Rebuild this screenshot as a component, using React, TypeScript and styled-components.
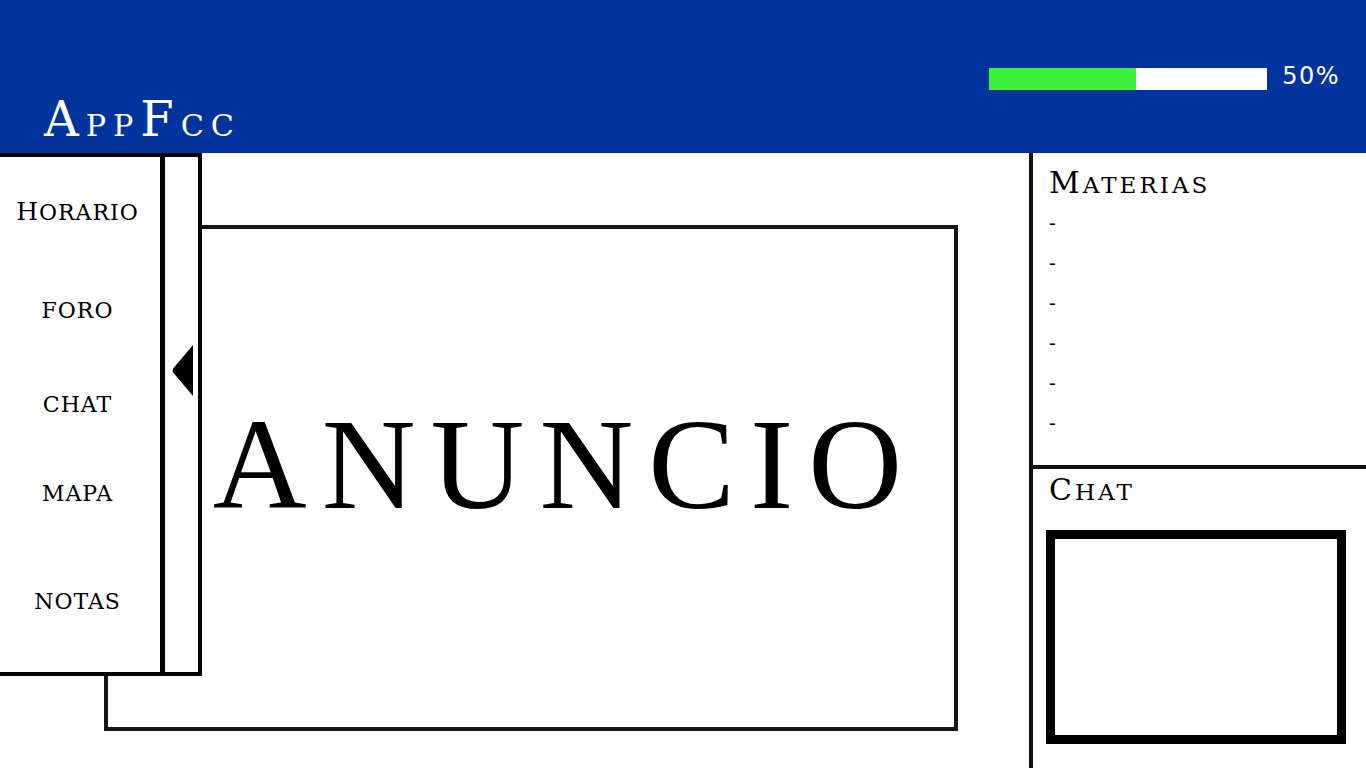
import React from "react";
import styled, { createGlobalStyle } from "styled-components";

const GlobalStyle = createGlobalStyle`
  html, body { margin: 0; padding: 0; background: #ffffff; }
  body { overflow: hidden; }
`;

const SERIF = `"DejaVu Serif", "Liberation Serif", serif`;

const Page = styled.div`
  width: 1366px;
  height: 768px;
  display: grid;
  grid-template-rows: 153px 1fr;
  font-family: ${SERIF};
  color: #000;
  overflow: hidden;
`;

const Header = styled.header`
  background: #00349c;
  display: flex;
  justify-content: space-between;
  align-items: flex-start;
  padding: 0 26px 0 44px;
`;

const Title = styled.h1`
  margin: 0;
  align-self: flex-end;
  padding-bottom: 3px;
  color: #fff;
  font-weight: normal;
  font-size: 48px;
  line-height: 48px;
  letter-spacing: 7px;
`;

const Low = styled.span<{ $scale: number }>`
  font-size: ${(p) => p.$scale}em;
  text-transform: uppercase;
`;

function SmallCaps({ text, scale }: { text: string; scale: number }) {
  const runs: { up: boolean; s: string }[] = [];
  for (const ch of text) {
    const up = ch === ch.toUpperCase() && ch !== ch.toLowerCase();
    const last = runs[runs.length - 1];
    if (last && last.up === up) last.s += ch;
    else runs.push({ up, s: ch });
  }
  return (
    <>
      {runs.map((r, i) =>
        r.up ? (
          <React.Fragment key={i}>{r.s}</React.Fragment>
        ) : (
          <Low key={i} $scale={scale}>
            {r.s}
          </Low>
        )
      )}
    </>
  );
}

const Progress = styled.div`
  display: flex;
  align-items: flex-start;
  gap: 15px;
  margin-top: 64px;
`;

const Track = styled.div`
  width: 278px;
  height: 22px;
  margin-top: 4px;
  background: #ffffff;
  display: flex;
`;

const Fill = styled.div<{ $pct: number }>`
  width: ${(p) => p.$pct}%;
  height: 100%;
  background: #3cf23a;
`;

const Percent = styled.span`
  font-family: "DejaVu Sans", "Liberation Sans", sans-serif;
  font-size: 24px;
  line-height: 24px;
  letter-spacing: 1.5px;
  color: #fff;
`;

const Body = styled.div`
  display: grid;
  grid-template-columns: 1fr 337px;
  min-height: 0;
`;

const Main = styled.main`
  position: relative;
  padding: 72px 0 0 104px;
`;

const AdBox = styled.section`
  box-sizing: border-box;
  width: 854px;
  height: 506px;
  border: 4px solid #161616;
  display: flex;
  align-items: center;
  justify-content: center;
  padding: 0 0 28px 68px;
`;

const AdText = styled.h2`
  margin: 0;
  font-family: "Liberation Serif", serif;
  font-weight: normal;
  font-size: 130px;
  line-height: 1;
  letter-spacing: 15px;
  white-space: nowrap;
`;

const Drawer = styled.nav`
  position: absolute;
  top: 0;
  left: 0;
  box-sizing: border-box;
  width: 202px;
  height: 523px;
  background: #fff;
  border: 4px solid #000;
  border-left: none;
  display: flex;
  z-index: 2;
`;

const Menu = styled.ul`
  list-style: none;
  margin: 0;
  padding: 0 5px 0 0;
  box-sizing: content-box;
  width: 155px;
  border-right: 5px solid #000;
  display: flex;
  flex-direction: column;
  align-items: center;
  font-size: 25px;
  letter-spacing: 1px;
`;

const MenuItem = styled.li<{ $gap: number }>`
  margin-top: ${(p) => p.$gap}px;
  line-height: 30px;
  white-space: nowrap;
`;

const Strip = styled.div`
  flex: 1;
  display: flex;
  justify-content: center;
  align-items: flex-start;
  padding-top: 188px;
`;

const Aside = styled.aside`
  border-left: 4px solid #111;
  display: grid;
  grid-template-rows: 316px 1fr;
`;

const Panel = styled.section<{ $top: number; $divider?: boolean }>`
  box-sizing: border-box;
  padding: ${(p) => p.$top}px 0 0 13px;
  border-bottom: ${(p) => (p.$divider ? "4px solid #111" : "none")};
`;

const PanelTitle = styled.h3`
  margin: 0 0 0 3px;
  font-weight: normal;
  font-size: 30px;
  line-height: 36px;
  letter-spacing: 3px;
`;

const Dashes = styled.ul`
  list-style: none;
  margin: 0;
  padding: 0 0 0 3px;
  font-size: 20px;
  line-height: 40px;
`;

const ChatBox = styled.div`
  box-sizing: border-box;
  width: 300px;
  height: 214px;
  margin-top: 20px;
  border: 9px solid #000;
`;

const menu = [
  { label: "Horario", gap: 40 },
  { label: "foro", gap: 67 },
  { label: "chat", gap: 63 },
  { label: "mapa", gap: 58 },
  { label: "notas", gap: 77 },
];

export default function App() {
  return (
    <>
      <GlobalStyle />
      <Page>
        <Header>
          <Title>
            <SmallCaps text="AppFcc" scale={0.63} />
          </Title>
          <Progress>
            <Track>
              <Fill $pct={53} />
            </Track>
            <Percent>50%</Percent>
          </Progress>
        </Header>
        <Body>
          <Main>
            <AdBox>
              <AdText>ANUNCIO</AdText>
            </AdBox>
            <Drawer>
              <Menu>
                {menu.map((m) => (
                  <MenuItem key={m.label} $gap={m.gap}>
                    <SmallCaps text={m.label} scale={0.88} />
                  </MenuItem>
                ))}
              </Menu>
              <Strip>
                <svg width="22" height="51" viewBox="0 0 22 51">
                  <path d="M22 0 V51 L3 28.5 Q0 25.5 3 22.5 Z" fill="#000" />
                </svg>
              </Strip>
            </Drawer>
          </Main>
          <Aside>
            <Panel $top={12} $divider>
              <PanelTitle>
                <SmallCaps text="Materias" scale={0.77} />
              </PanelTitle>
              <Dashes>
                {Array.from({ length: 6 }).map((_, i) => (
                  <li key={i}>-</li>
                ))}
              </Dashes>
            </Panel>
            <Panel $top={3}>
              <PanelTitle>
                <SmallCaps text="Chat" scale={0.77} />
              </PanelTitle>
              <ChatBox />
            </Panel>
          </Aside>
        </Body>
      </Page>
    </>
  );
}
